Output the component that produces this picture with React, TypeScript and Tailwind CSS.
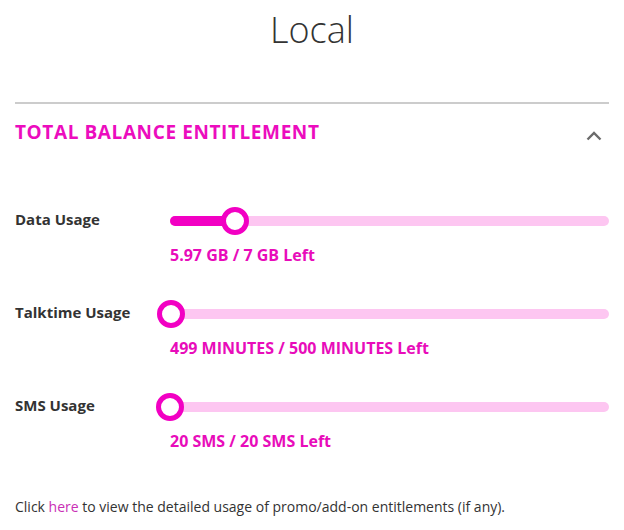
import React from 'react';

type Usage = {
  label: string;
  used: number;
  total: number;
  text: string;
};

const usages: Usage[] = [
  { label: 'Data Usage', used: 1.03, total: 7, text: '5.97 GB / 7 GB Left' },
  { label: 'Talktime Usage', used: 1, total: 500, text: '499 MINUTES / 500 MINUTES Left' },
  { label: 'SMS Usage', used: 0, total: 20, text: '20 SMS / 20 SMS Left' },
];

function UsageRow({ label, used, total, text }: Usage) {
  const pct = (used / total) * 100;
  return (
    <div className="flex items-start">
      <div className="w-[155px] pt-[1.5px] text-[15px] leading-[20px] font-bold text-[#333333]">{label}</div>
      <div className="flex-1 flex flex-col">
        <div className="relative h-[28px] flex items-center">
          <div className="w-full h-[10px] rounded-full bg-[#fdc6f1]" />
          <div
            className="absolute left-0 top-[9px] h-[10px] rounded-full bg-[#f200c3]"
            style={{ width: `${pct}%` }}
          />
          <div
            className="absolute top-0 w-[28px] h-[28px] -ml-[14px] rounded-full bg-white border-[5px] border-[#f200c3]"
            style={{ left: `${pct}%` }}
          />
        </div>
        <div className="mt-[8px] text-[16px] leading-[24px] font-bold text-[#e80cba]">{text}</div>
      </div>
    </div>
  );
}

export default function App() {
  return (
    <div className="w-[624px] h-[530px] bg-white px-[15px] font-['Open_Sans',sans-serif] text-[#333333] overflow-hidden">
      <h1 className="pt-[10px] text-center text-[36px] leading-[40px] font-light text-[#333333]">Local</h1>

      <div className="mt-[51.5px] border-t-2 border-[#cccccc]" />

      <div className="mt-[14px] flex items-center justify-between">
        <h2 className="text-[19px] leading-[28px] font-bold tracking-[0.6px] text-[#ec0cbe]">TOTAL BALANCE ENTITLEMENT</h2>
        <svg width="16" height="10" viewBox="0 0 16 10" className="mt-[8px] mr-[7px]">
          <polyline points="1.5,8.5 8,2 14.5,8.5" fill="none" stroke="#6b6b6b" strokeWidth="2.4" />
        </svg>
      </div>

      <div className="mt-[61.5px] flex flex-col gap-[33px]">
        {usages.map((u) => (
          <UsageRow key={u.label} {...u} />
        ))}
      </div>

      <p className="mt-[43.5px] text-[14px] leading-[20px] text-[#333333]">
        Click <a className="text-[#c92fb5]">here</a> to view the detailed usage of promo/add-on entitlements (if any).
      </p>
    </div>
  );
}
